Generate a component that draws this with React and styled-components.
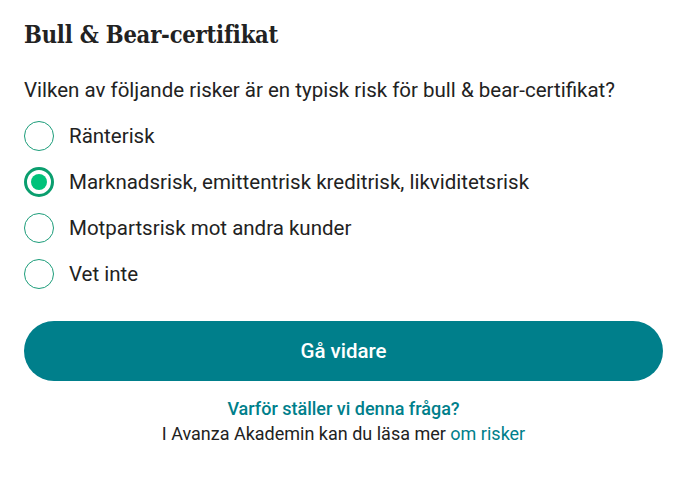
import React, {useState} from "react";
import styled, {createGlobalStyle} from "styled-components";

const GlobalStyle = createGlobalStyle`
  body {
    margin: 0;
    background: #fff;
    font-family: Roboto, "Liberation Sans", sans-serif;
    color: #222;
  }
`;

const Page = styled.div`
  padding: 19px 23px 0 24px;
  display: flex;
  flex-direction: column;
`;

const Title = styled.h2`
  margin: 0;
  font-family: "DejaVu Serif", "Liberation Serif", serif;
  font-stretch: condensed;
  font-weight: 700;
  font-size: 23.5px;
  line-height: 32px;
  color: #222;
  letter-spacing: -0.2px;
`;

const Question = styled.p`
  margin: 24px 0 16px;
  font-size: 20.5px;
  line-height: 30px;
`;

const OptionList = styled.div`
  display: flex;
  flex-direction: column;
  gap: 16px;
`;

const Option = styled.label`
  display: flex;
  align-items: center;
  gap: 15px;
  font-size: 20.5px;
  line-height: 30px;
  cursor: pointer;
`;

const Radio = styled.span`
  box-sizing: border-box;
  width: 30px;
  height: 30px;
  border-radius: 50%;
  border: ${p => (p.checked ? "3px solid #0a9e6e" : "1px solid #1c9d7a")};
  display: flex;
  align-items: center;
  justify-content: center;
  flex-shrink: 0;

  &::after {
    content: "";
    display: ${p => (p.checked ? "block" : "none")};
    width: 16px;
    height: 16px;
    border-radius: 50%;
    background: #00c27a;
  }
`;

const NextButton = styled.button`
  margin-top: 32px;
  height: 60px;
  width: 100%;
  border: none;
  border-radius: 30px;
  background: #007f8b;
  color: #fff;
  font-family: Roboto, "Liberation Sans", sans-serif;
  font-weight: 500;
  font-size: 20.5px;
  cursor: pointer;
`;

const Footer = styled.div`
  margin-top: 15px;
  text-align: center;
  font-size: 18px;
  line-height: 25px;
`;

const WhyLink = styled.a`
  display: block;
  color: #007f8b;
  font-weight: 500;
  text-decoration: none;
`;

const InlineLink = styled.a`
  color: #007f8b;
  text-decoration: none;
`;

const options = [
  "Ränterisk",
  "Marknadsrisk, emittentrisk kreditrisk, likviditetsrisk",
  "Motpartsrisk mot andra kunder",
  "Vet inte",
];

function App() {
  const [selected, setSelected] = useState(1);

  return (
    <Page>
      <GlobalStyle />
      <Title>Bull &amp; Bear-certifikat</Title>
      <Question>Vilken av följande risker är en typisk risk för bull &amp; bear-certifikat?</Question>
      <OptionList>
        {options.map((o, i) => (
          <Option key={o} onClick={() => setSelected(i)}>
            <Radio checked={selected === i} />
            {o}
          </Option>
        ))}
      </OptionList>
      <NextButton>Gå vidare</NextButton>
      <Footer>
        <WhyLink href="#">Varför ställer vi denna fråga?</WhyLink>
        I Avanza Akademin kan du läsa mer <InlineLink href="#">om risker</InlineLink>
      </Footer>
    </Page>
  );
}

export default App;
